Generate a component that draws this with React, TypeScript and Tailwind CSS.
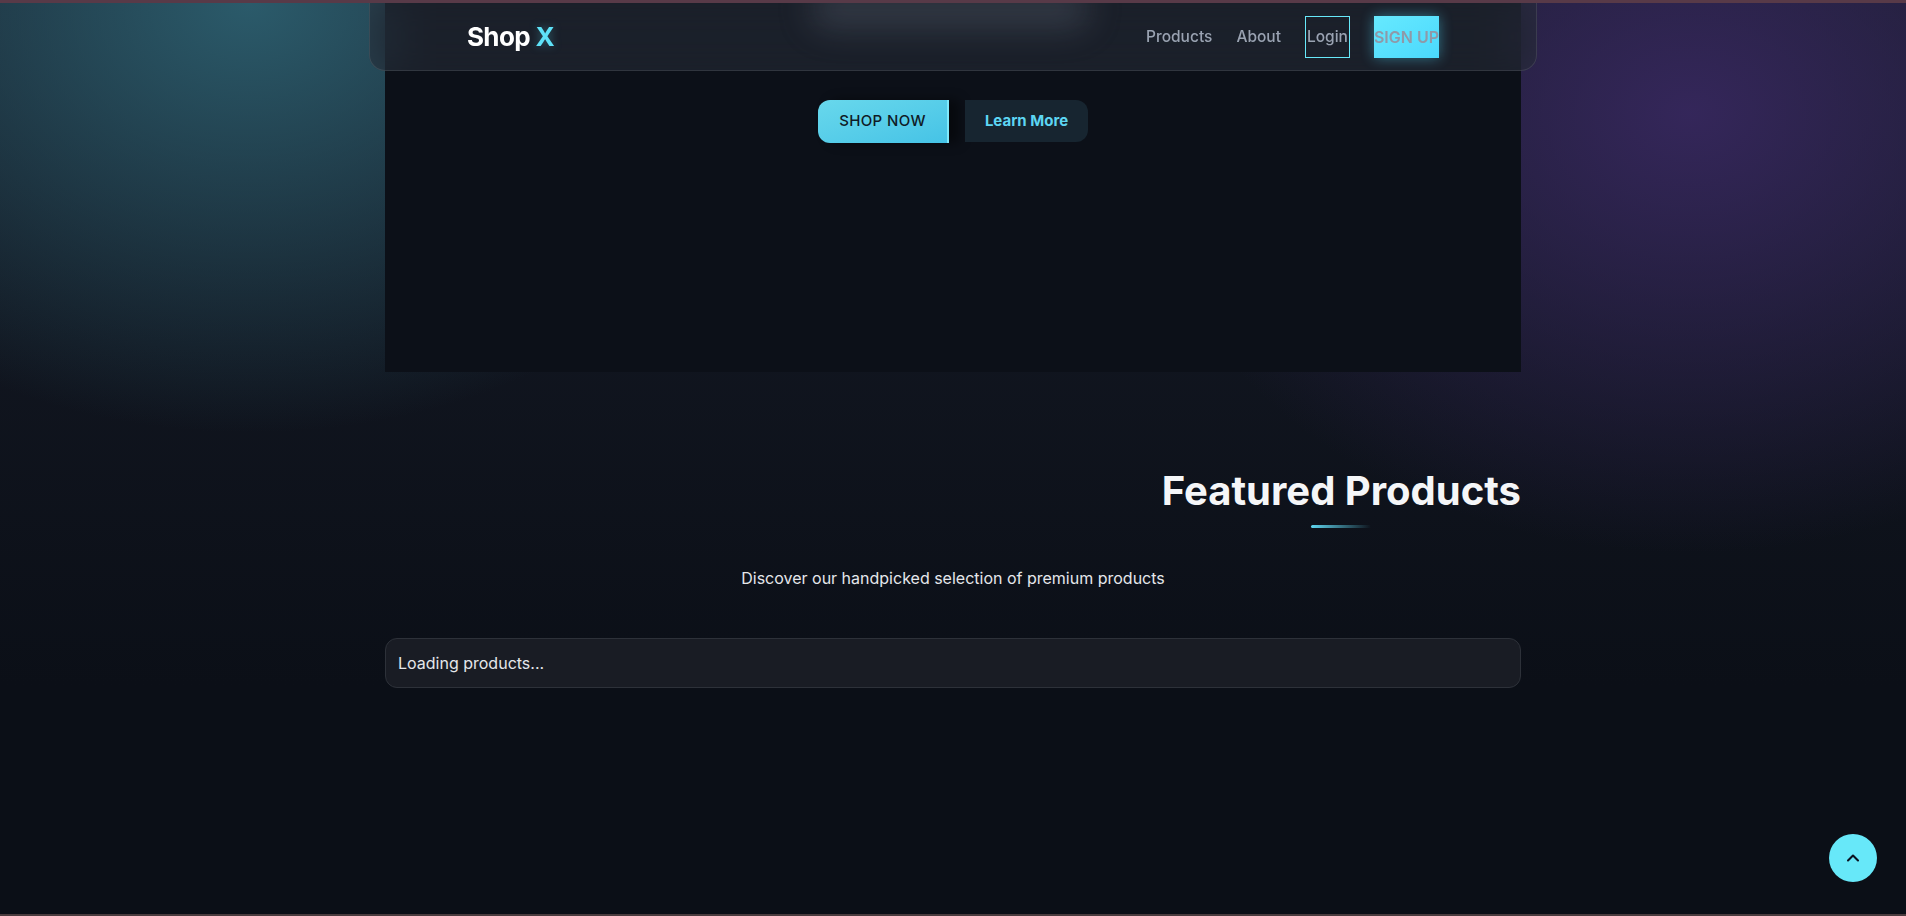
import { ChevronUp } from 'lucide-react'

function Navbar() {
  return (
    <nav className="absolute left-1/2 top-0 z-20 h-[68px] w-[1168px] -translate-x-1/2 overflow-hidden rounded-b-2xl border border-t-0 border-white/10 bg-[#2a303c]/50 backdrop-blur-xl">
      {/* blurred hero title showing through the glass */}
      <div className="pointer-events-none absolute left-[440px] top-[-14px] h-[40px] w-[280px] rounded-full bg-[#6b7384]/30 blur-lg" />
      <div className="relative flex h-full items-center justify-between px-[97px]">
        <a href="#" className="text-[26px] font-bold tracking-tight text-white">
          Shop <span className="text-[#5ee2f8] [text-shadow:0_0_10px_rgba(94,226,248,0.35)]">X</span>
        </a>
        <div className="flex items-center gap-6 text-[15.5px] font-medium text-[#9aa3b2]">
          <a href="#">Products</a>
          <a href="#">About</a>
          <button className="h-[42px] border border-[#67e8f9] px-px text-[#9aa3b2]">Login</button>
          <button className="h-[42px] bg-linear-to-br from-[#66e9fe] to-[#4ad9fd] text-base font-semibold text-[#8f99a8] shadow-[0_0_14px_rgba(80,220,253,0.45)]">
            SIGN UP
          </button>
        </div>
      </div>
    </nav>
  )
}

function Hero() {
  return (
    <section className="flex h-[369px] justify-center bg-[#0c1018] pt-[97px]">
      <div className="flex items-start gap-4">
        <button className="h-[43px] w-[131px] rounded-l-xl border-r-2 border-[#7fe9fb] bg-linear-to-br from-[#68d8ec] to-[#45c3e6] text-[15px] font-medium tracking-wide text-[#0f1b26] shadow-[10px_0_12px_rgba(0,0,0,0.45)]">
          SHOP NOW
        </button>
        <button className="h-[42px] w-[123px] rounded-r-xl bg-[#172530] text-[15px] font-bold text-[#5dd6f3]">
          Learn More
        </button>
      </div>
    </section>
  )
}

function FeaturedProducts() {
  return (
    <section className="pt-[95px]">
      <div className="flex justify-end">
        <div className="flex flex-col items-center">
          <h2 className="text-[40px] font-bold leading-[48px] text-[#f5f6f8]">Featured Products</h2>
          <div className="mt-[10px] h-[3px] w-[60px] rounded-full bg-linear-to-r from-[#5fd6f0] to-transparent" />
        </div>
      </div>
      <p className="mt-[38px] text-center text-base text-gray-200">
        Discover our handpicked selection of premium products
      </p>
      <div className="mt-[48px] rounded-xl border border-[#2d3139] bg-[#191c24] p-3 text-base text-gray-200">
        Loading products...
      </div>
    </section>
  )
}

export default function App() {
  return (
    <div
      className="relative h-[916px] overflow-hidden border-t-[3px] border-b-[2px] border-t-[#583a48] border-b-[#4a3b3e] bg-[radial-gradient(560px_430px_at_250px_0px,rgba(44,94,110,0.95),transparent),radial-gradient(560px_440px_at_1690px_110px,rgba(56,40,96,0.9),transparent),linear-gradient(to_bottom,#161b27,#0b0f17_75%)] font-['Inter',sans-serif]"
    >
      <Navbar />
      <main className="mx-auto w-[1136px]">
        <Hero />
        <FeaturedProducts />
      </main>
      <button className="fixed bottom-[34px] right-[29px] flex h-12 w-12 items-center justify-center rounded-full bg-[#67e8f9] text-[#0b1220]">
        <ChevronUp className="h-5 w-5" strokeWidth={2.5} />
      </button>
    </div>
  )
}
